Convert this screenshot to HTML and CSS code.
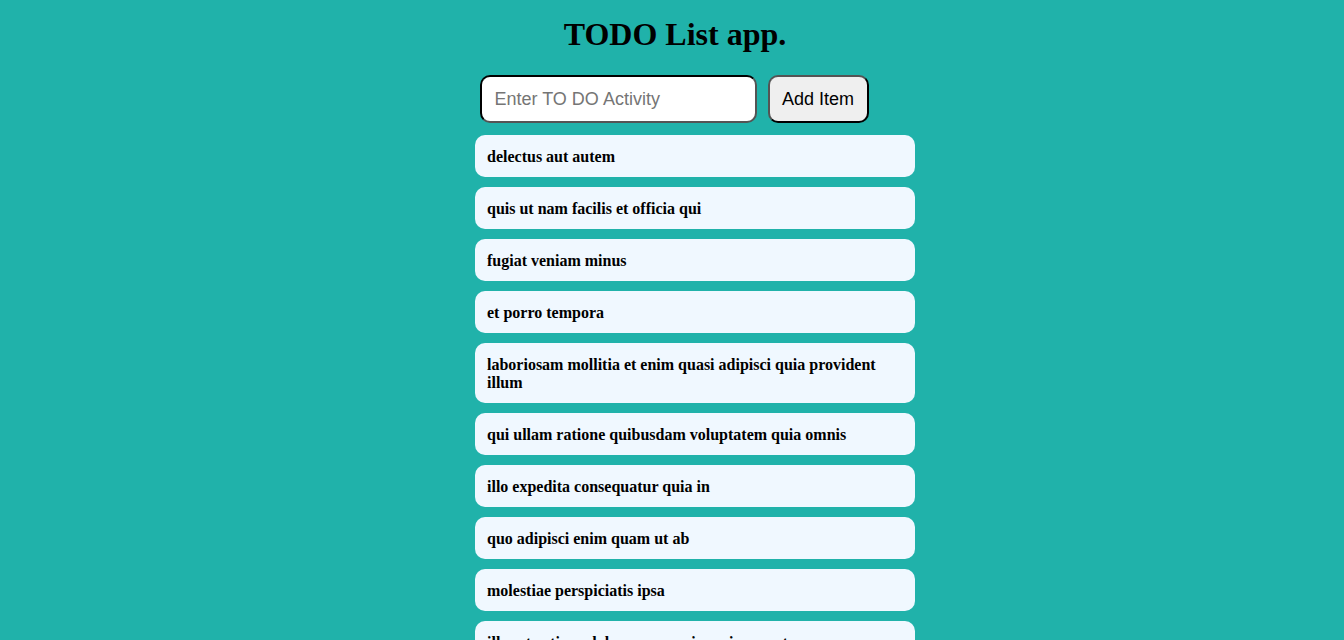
FILE: index.html
```html
<!DOCTYPE html>
<html>
<head>
<meta charset="utf-8">
<title>TODO List app.</title>
<link rel="stylesheet" href="styles.css">
</head>
<body>
<main class="app">
  <h1 class="title">TODO List app.</h1>
  <div class="entry">
    <input class="entry-input" type="text" placeholder="Enter TO DO Activity">
    <button class="entry-btn">Add Item</button>
  </div>
  <ul class="todo-list">
    <li class="todo">delectus aut autem</li>
    <li class="todo">quis ut nam facilis et officia qui</li>
    <li class="todo">fugiat veniam minus</li>
    <li class="todo">et porro tempora</li>
    <li class="todo">laboriosam mollitia et enim quasi adipisci quia provident illum</li>
    <li class="todo">qui ullam ratione quibusdam voluptatem quia omnis</li>
    <li class="todo">illo expedita consequatur quia in</li>
    <li class="todo">quo adipisci enim quam ut ab</li>
    <li class="todo">molestiae perspiciatis ipsa</li>
    <li class="todo">illo est ratione doloremque quia maiores aut</li>
  </ul>
</main>
</body>
</html>
```

FILE: styles.css
```css
html, body {
  margin: 0;
  padding: 0;
  background: #20b2aa;
  overflow: hidden;
}

.app {
  display: flex;
  flex-direction: column;
  align-items: center;
  padding: 16px 0 0 6px;
  font-family: "Liberation Serif", "Times New Roman", serif;
}

.title {
  margin: 0 0 22px;
  font-size: 32px;
  font-weight: bold;
  color: #000;
  line-height: normal;
}

.entry {
  display: flex;
  gap: 11px;
  margin: 0 2px 12px 0;
}

.entry-input {
  box-sizing: border-box;
  width: 277px;
  height: 48px;
  padding: 0 13px;
  border: 2px inset #000;
  border-radius: 10px;
  background: #fff;
  font-family: "Liberation Sans", Arial, sans-serif;
  font-size: 18px;
  color: #000;
  outline: none;
}

.entry-input::placeholder {
  color: #757575;
}

.entry-btn {
  box-sizing: border-box;
  width: 101px;
  height: 48px;
  padding: 0;
  border: 2px outset #000;
  border-radius: 10px;
  background: #efefef;
  font-family: "Liberation Sans", Arial, sans-serif;
  font-size: 18px;
  color: #000;
}

.todo-list {
  list-style: none;
  margin: 0;
  padding: 0 0 0 40px;
  width: 440px;
  display: flex;
  flex-direction: column;
  gap: 10px;
}

.todo {
  background: #f0f8ff;
  border-radius: 10px;
  padding: 13px 12px 11px;
  font-size: 16px;
  font-weight: bold;
  line-height: 18px;
  color: #000;
}
```
